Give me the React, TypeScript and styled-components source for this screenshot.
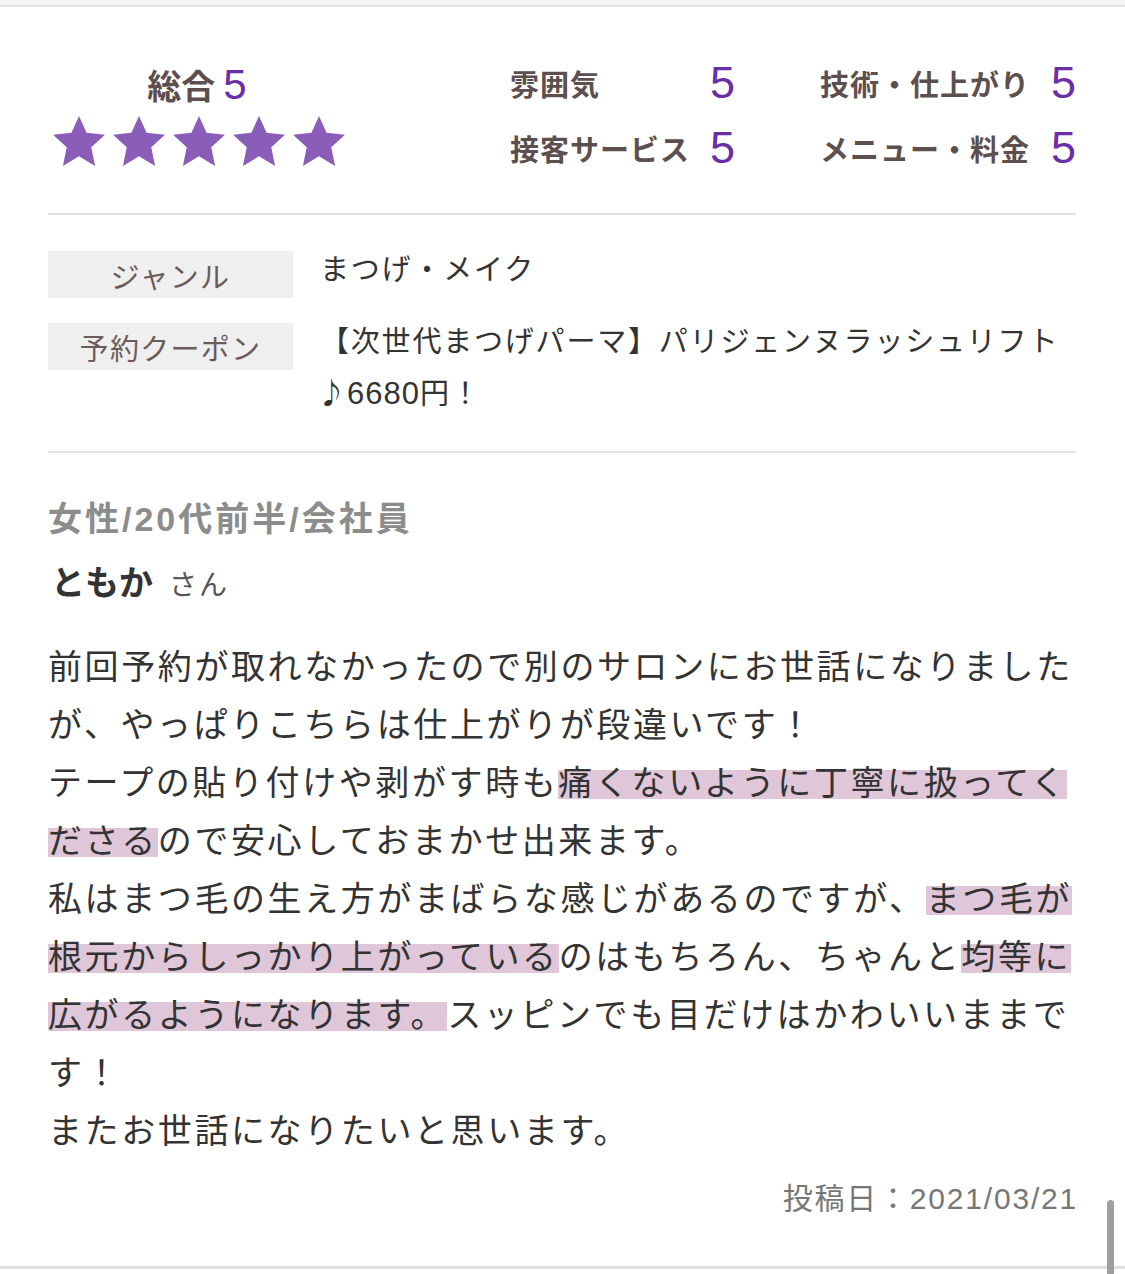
import React from "react";
import styled, { createGlobalStyle } from "styled-components";

const Global = createGlobalStyle`
  html, body { margin: 0; padding: 0; background: #ffffff; }
  body {
    font-family: "Liberation Sans", "Noto Sans CJK JP", sans-serif;
    color: #333333;
    -webkit-font-smoothing: antialiased;
  }
`;

const Page = styled.div`
  position: relative;
  width: 1125px;
  height: 1274px;
  overflow: hidden;
  background: #ffffff;
`;

const TopStrip = styled.div`
  height: 5px;
  background: #f4f4f2;
  border-bottom: 2px solid #e2e2e2;
`;

const Content = styled.div`
  padding: 0 49px 0 48px;
`;

const Ratings = styled.section`
  display: flex;
  align-items: flex-start;
  padding: 51px 0 40px;
  border-bottom: 2px solid #e3e3e3;
`;

const Overall = styled.div`
  width: 300px;
  margin-top: 4px;
  display: flex;
  flex-direction: column;
  align-items: center;
  gap: 6px;
`;

const OverallTitle = styled.div`
  display: flex;
  align-items: baseline;
  gap: 8px;
  font-size: 34px;
  line-height: 46px;
  font-weight: 700;
  color: #5e4f4f;
  padding-right: 2px;
`;

const Score = styled.span<{ $size: number }>`
  font-family: "Liberation Sans", sans-serif;
  font-weight: 400;
  font-size: ${(p) => p.$size}px;
  color: #6a2ea6;
`;

const Stars = styled.div`
  display: flex;
  gap: 8px;
  padding-left: 2px;
`;

const StarIcon = styled.svg`
  width: 52px;
  height: 50px;
  display: block;
`;

const Grid = styled.div`
  margin-left: auto;
  display: grid;
  grid-template-columns: 225px 256px;
  column-gap: 85px;
  row-gap: 15px;
`;

const Cell = styled.div`
  display: flex;
  align-items: center;
  justify-content: space-between;
  height: 50px;
`;

const CellLabel = styled.span`
  font-size: 29px;
  font-weight: 700;
  letter-spacing: 1px;
  color: #5e4f4f;
`;

const Info = styled.section`
  display: grid;
  row-gap: 25px;
  padding: 36px 0 32px;
  border-bottom: 2px solid #e3e3e3;
`;

const InfoRow = styled.div`
  display: flex;
  align-items: flex-start;
  gap: 27px;
`;

const InfoLabel = styled.div`
  flex: 0 0 245px;
  height: 47px;
  background: #efefef;
  display: flex;
  align-items: center;
  justify-content: center;
  font-size: 29px;
  letter-spacing: 1.3px;
  color: #6b5b5b;
`;

const InfoValue = styled.div`
  margin-top: -5px;
  font-size: 29px;
  line-height: 49px;
  letter-spacing: 1.8px;
  color: #333333;
  white-space: nowrap;
`;

const Note = styled.span`
  font-family: "Noto Sans CJK JP", sans-serif;
  font-size: 29px;
  letter-spacing: 0;
  margin-left: -3px;
  margin-right: 1px;
`;

const Digits = styled.span`
  font-size: 31px;
  letter-spacing: 1px;
`;

const Review = styled.section`
  padding: 41px 0 0;
`;

const Profile = styled.div`
  font-size: 34px;
  line-height: 50px;
  font-weight: 700;
  letter-spacing: 3px;
  color: #8c8c8c;
`;

const NameLine = styled.div`
  margin-top: 14px;
  display: flex;
  align-items: baseline;
  gap: 16px;
  line-height: 50px;
  padding-left: 3px;
`;

const Name = styled.span`
  font-size: 34px;
  font-weight: 700;
  color: #333333;
`;

const Honorific = styled.span`
  font-size: 28px;
  letter-spacing: 2px;
  color: #555555;
`;

const Body = styled.p`
  margin: 27px 0 0;
  font-size: 34px;
  line-height: 58px;
  letter-spacing: 2.6px;
  color: #333333;
  white-space: nowrap;
`;

const Mark = styled.span`
  background: linear-gradient(
    to bottom,
    transparent 17%,
    #dfc7d9 17%,
    #dfc7d9 91%,
    transparent 91%
  );
`;

const PostDate = styled.div`
  margin-top: 17px;
  text-align: right;
  font-size: 30px;
  line-height: 44px;
  letter-spacing: 1.8px;
  color: #777777;
  margin-right: -2px;
`;

const BottomRule = styled.div`
  margin-top: 45px;
  height: 3px;
  background: #e0e0e0;
`;

const ScrollThumb = styled.div`
  position: absolute;
  right: 11px;
  top: 1200px;
  width: 7px;
  height: 90px;
  border-radius: 4px;
  background: #9f9f9f;
`;

const Star = () => (
  <StarIcon viewBox="1.5 1.6 21 20.2">
    <polygon
      fill="#8a5db9"
      points="12,1.6 15.05,8.35 22.5,9.15 16.95,14.2 18.5,21.8 12,17.9 5.5,21.8 7.05,14.2 1.5,9.15 8.95,8.35"
    />
  </StarIcon>
);

const ratingItems = [
  { label: "雰囲気", score: 5 },
  { label: "技術・仕上がり", score: 5 },
  { label: "接客サービス", score: 5 },
  { label: "メニュー・料金", score: 5 },
];

export default function App() {
  return (
    <Page>
      <Global />
      <TopStrip />
      <Content>
        <Ratings>
          <Overall>
            <OverallTitle>
              総合<Score $size={42}>5</Score>
            </OverallTitle>
            <Stars>
              {[0, 1, 2, 3, 4].map((i) => (
                <Star key={i} />
              ))}
            </Stars>
          </Overall>
          <Grid>
            {ratingItems.map((r) => (
              <Cell key={r.label}>
                <CellLabel>{r.label}</CellLabel>
                <Score $size={45}>{r.score}</Score>
              </Cell>
            ))}
          </Grid>
        </Ratings>

        <Info>
          <InfoRow>
            <InfoLabel>ジャンル</InfoLabel>
            <InfoValue>まつげ・メイク</InfoValue>
          </InfoRow>
          <InfoRow>
            <InfoLabel>予約クーポン</InfoLabel>
            <InfoValue>
              【次世代まつげパーマ】パリジェンヌラッシュリフト
              <br />
              <Note>♪</Note>
              <Digits>6680</Digits>円！
            </InfoValue>
          </InfoRow>
        </Info>

        <Review>
          <Profile>女性/20代前半/会社員</Profile>
          <NameLine>
            <Name>ともか</Name>
            <Honorific>さん</Honorific>
          </NameLine>
          <Body>
            前回予約が取れなかったので別のサロンにお世話になりました
            <br />
            が、やっぱりこちらは仕上がりが段違いです！
            <br />
            テープの貼り付けや剥がす時も<Mark>痛くないように丁寧に扱ってく</Mark>
            <br />
            <Mark>ださる</Mark>ので安心しておまかせ出来ます。
            <br />
            私はまつ毛の生え方がまばらな感じがあるのですが、<Mark>まつ毛が</Mark>
            <br />
            <Mark>根元からしっかり上がっている</Mark>のはもちろん、ちゃんと<Mark>均等に</Mark>
            <br />
            <Mark>広がるようになります。</Mark>スッピンでも目だけはかわいいままで
            <br />
            す！
            <br />
            またお世話になりたいと思います。
          </Body>
          <PostDate>投稿日：2021/03/21</PostDate>
        </Review>
      </Content>
      <BottomRule />
      <ScrollThumb />
    </Page>
  );
}
